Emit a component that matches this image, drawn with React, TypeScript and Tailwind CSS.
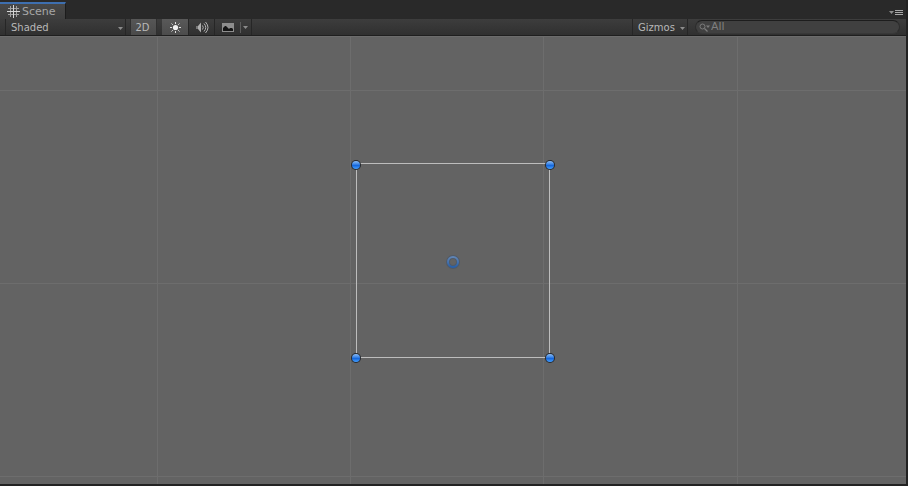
import React from "react";

const COLUMNS = [-876, -683, -489, -296, -103, 90, 284, 477, 670, 864];
const ROWS = [-751, -558, -364, -171, 22, 215, 409, 602, 795];
const HANDLES = [
  [-97, -95.5],
  [97, -95.5],
  [-97, 97.5],
  [97, 97.5],
];

function Caret({ className = "" }: { className?: string }) {
  return (
    <svg className={`shrink-0 ${className}`} width="5" height="3" viewBox="0 0 5 3" aria-hidden="true">
      <path d="M0 0h5L2.5 3z" fill="#8c8c8c" />
    </svg>
  );
}

function GridIcon() {
  return (
    <svg width="13" height="13" viewBox="0 0 13 13" shapeRendering="crispEdges" aria-hidden="true">
      <path d="M3 1h1v11H3zM9 1h1v11H9zM1 3h11v1H1zM1 9h11v1H1z" fill="#a0a0a0" />
      <path d="M6 0h1v13H6zM0 6h13v1H0z" fill="#d6d6d6" />
    </svg>
  );
}

function SunIcon() {
  return (
    <svg width="13" height="13" viewBox="0 0 13 13" aria-hidden="true">
      <circle cx="6.5" cy="6.5" r="2.6" fill="#f2f2f2" />
      <path
        d="M6.5 1v2M6.5 10v2M1 6.5h2M10 6.5h2M2.5 2.5l1.3 1.3M9.2 9.2l1.3 1.3M10.5 2.5L9.2 3.8M3.8 9.2l-1.3 1.3"
        stroke="#dcdcdc"
        fill="none"
      />
    </svg>
  );
}

function SpeakerIcon() {
  return (
    <svg width="14" height="13" viewBox="0 0 14 13" aria-hidden="true">
      <path d="M1 5h2v3H1z" fill="#777" />
      <path d="M3 5l3-3.5v10L3 8z" fill="#b0b0b0" />
      <path d="M7.5 4.5q1.5 2 0 4M9 2.5q3.5 4 0 8M10.5 1q5 5.5 0 11" stroke="#b4b4b4" fill="none" />
    </svg>
  );
}

function PictureIcon() {
  return (
    <svg width="12" height="9" viewBox="0 0 12 9" aria-hidden="true">
      <path d="M0 0h12v9H0z" fill="#8e8e8e" />
      <path d="M1 8V5l1-1 1-1h1l2 2 1 1 1-1h2l1 1v2z" fill="#151515" />
    </svg>
  );
}

function Toolbar() {
  return (
    <div className="flex h-[17px] items-stretch border-b border-[#1f1f1f] bg-linear-to-b from-[#3d3d3d] to-[#303030] text-[10px] leading-4 text-[#b8b8b8]">
      <div className="relative ml-[5px] flex w-[121px] border-x border-[#262626]">
        <select
          aria-label="Draw mode"
          className="w-full appearance-none bg-transparent pt-px pl-[5px] leading-4 outline-none"
        >
          <option>Shaded</option>
        </select>
        <Caret className="pointer-events-none absolute top-2 right-[2px]" />
      </div>
      <button className="ml-1 w-[27px] border-x border-[#303030] bg-linear-to-b from-[#565656] to-[#4a4a4a] pt-px pr-[2px]">
        2D
      </button>
      <button
        aria-label="Scene lighting"
        className="ml-[5px] flex w-[27px] items-center justify-center border-r border-[#262626] bg-linear-to-b from-[#595959] to-[#4c4c4c]"
      >
        <SunIcon />
      </button>
      <button aria-label="Scene audio" className="flex w-[26px] items-center justify-center border-r border-[#262626]">
        <SpeakerIcon />
      </button>
      <button aria-label="Effects" className="flex w-[37px] items-center border-r border-[#262626] pl-[7px]">
        <PictureIcon />
        <span className="ml-[6px] h-[11px] w-px bg-[#5c5c5c]" />
        <Caret className="ml-[2px]" />
      </button>
      <div className="grow" />
      <button className="flex w-14 items-center justify-between border-x border-[#262626] pt-px pr-[2px] pl-[5px]">
        Gizmos
        <Caret className="mt-px" />
      </button>
      <div className="flex items-center pr-[6px] pl-[7px]">
        <label className="flex h-[14px] w-[205px] items-center rounded-full border border-t-[#1d1d1d] border-r-[#2c2c2c] border-b-[#383838] border-l-[#2c2c2c] bg-[#404040] pl-[3px]">
          <svg width="11" height="9" viewBox="0 0 11 9" aria-hidden="true">
            <circle cx="3.5" cy="3.5" r="2.5" stroke="#7c7c7c" fill="none" />
            <path d="M5.5 5.5l3 3" stroke="#7c7c7c" strokeWidth="1.3" />
            <path d="M7 2.5h4l-2 2.5z" fill="#7c7c7c" />
          </svg>
          <input
            aria-label="Search scene"
            placeholder="All"
            className="ml-px h-3 w-0 grow bg-transparent text-[11px] leading-3 outline-none placeholder:text-[#7f7f7f]"
          />
        </label>
      </div>
    </div>
  );
}

function SceneCanvas() {
  return (
    <main className="min-h-0 grow border-t border-[#6c6c6c] bg-[#636363]">
      <svg className="block h-full w-full" role="img" aria-label="Scene canvas">
        <defs>
          <linearGradient id="handle" x1="0" y1="0" x2="0" y2="1">
            <stop offset="0" stopColor="#8dbdf5" />
            <stop offset="0.4" stopColor="#3d86e6" />
            <stop offset="0.55" stopColor="#1466dc" />
            <stop offset="1" stopColor="#45a0ff" />
          </linearGradient>
          <linearGradient id="pivot" x1="0" y1="0" x2="0" y2="1">
            <stop offset="0" stopColor="#6085b5" />
            <stop offset="1" stopColor="#2860aa" />
          </linearGradient>
        </defs>
        <svg x="50%" y="50%" overflow="visible">
          <g fill="#6d6d6d" shapeRendering="crispEdges">
            {COLUMNS.map((x) => (
              <rect key={x} x={x} y="-1000" width="1" height="2000" />
            ))}
            {ROWS.map((y) => (
              <rect key={y} x="-1000" y={y} width="2000" height="1" />
            ))}
          </g>
          <rect x="-97" y="-97" width="193" height="194" fill="none" stroke="#bdbdbd" shapeRendering="crispEdges" />
          {HANDLES.map(([x, y]) => (
            <g key={`${x},${y}`}>
              <circle cx={x} cy={y} r="5" fill="#25292f" />
              <circle cx={x} cy={y} r="4" fill="url(#handle)" />
            </g>
          ))}
          <circle cx="0" cy="1.5" r="5" fill="none" stroke="#505a68" strokeWidth="4" />
          <circle cx="0" cy="1.5" r="5" fill="none" stroke="url(#pivot)" strokeWidth="2" />
        </svg>
      </svg>
    </main>
  );
}

export default function App() {
  return (
    <div className="flex h-screen flex-col overflow-hidden border-r-2 border-b-2 border-[#222222] bg-[#292929] font-['DejaVu_Sans',sans-serif]">
      <header className="flex h-[19px] items-end justify-between">
        <button className="flex h-[17px] w-[66px] items-center gap-[2px] border-t-2 border-r border-t-[#3e6fb0] border-r-[#1c1c1c] bg-linear-to-b from-[#484848] to-[#3e3e3e] pl-[7px] text-[11px] leading-4 text-[#a6a6a6]">
          <GridIcon />
          Scene
        </button>
        <button aria-label="Panel menu" className="flex items-start gap-px pr-[3px] pb-1">
          <Caret className="mt-px" />
          <svg width="8" height="5" viewBox="0 0 8 5" shapeRendering="crispEdges" aria-hidden="true">
            <path d="M0 0h8v1H0zM0 2h8v1H0zM0 4h8v1H0z" fill="#a8a8a8" />
          </svg>
        </button>
      </header>
      <Toolbar />
      <SceneCanvas />
    </div>
  );
}
